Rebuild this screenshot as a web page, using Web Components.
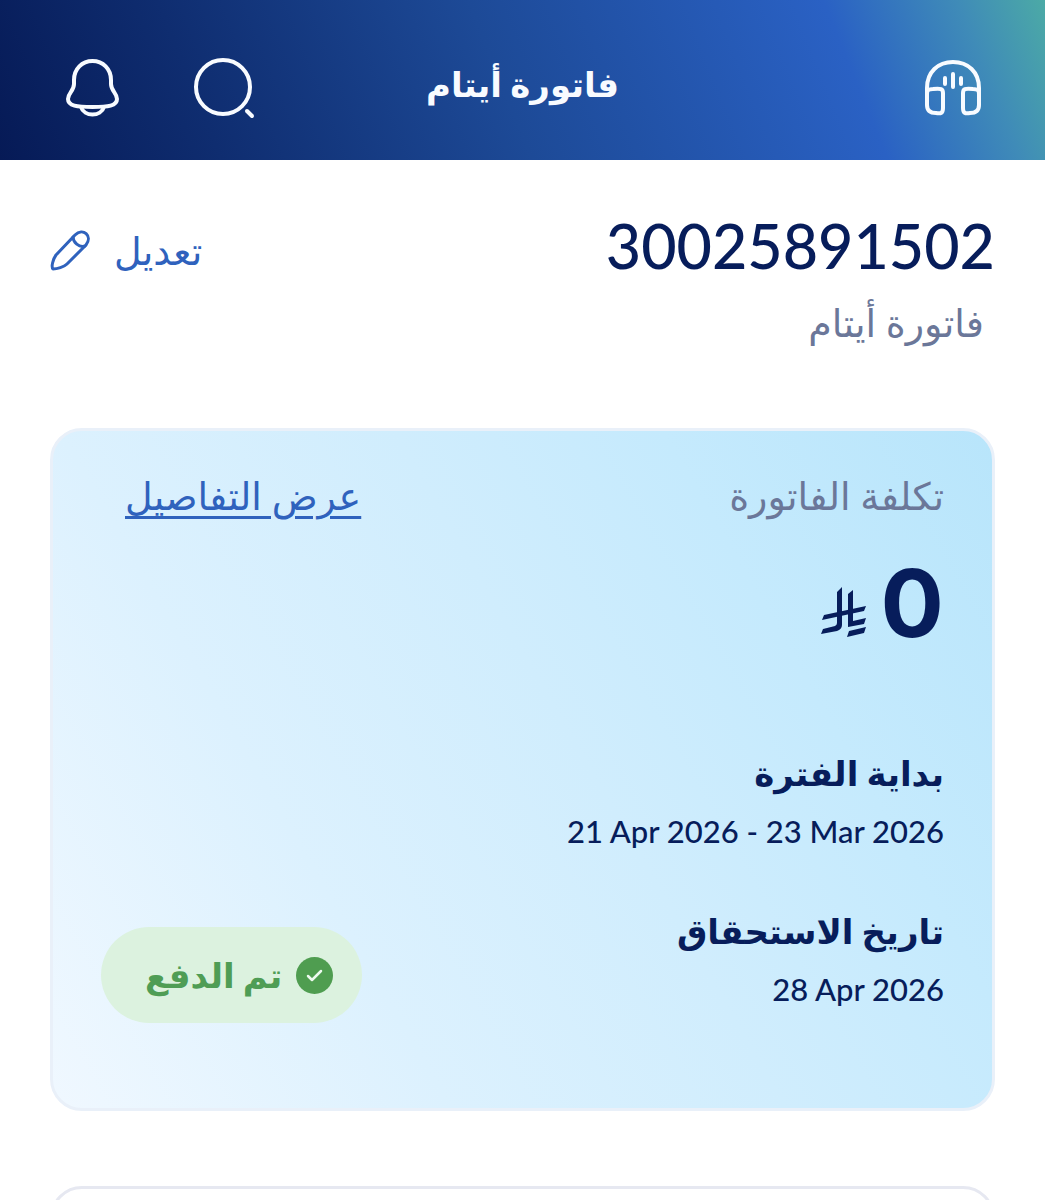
<!DOCTYPE html>
<html lang="ar" dir="rtl">
<head>
<meta charset="utf-8">
<meta name="viewport" content="width=device-width, initial-scale=1">
<title>فاتورة أيتام</title>
<style>
  body {
    margin: 0;
    background: #fff;
    color: #071d5b;
    font-family: Lato, "DejaVu Sans", sans-serif;
    --blue: #2f62bd;
    --muted: #6b7799;
    --line: #e6e8f1;
  }
</style>
</head>
<body>
<bill-page></bill-page>
<script>
  function define(name, html) {
    const template = document.createElement('template');
    template.innerHTML = html;
    customElements.define(name, class extends HTMLElement {
      constructor() {
        super();
        this.attachShadow({ mode: 'open' }).append(template.content.cloneNode(true));
      }
    });
  }

  define('icon-button', `
    <style>
      :host { display: block; }
      button { display: flex; align-items: center; gap: 24px; margin: 0; padding: 0; border: 0; background: none; color: inherit; font: inherit; cursor: pointer; }
    </style>
    <button type="button"><slot></slot></button>`);

  define('app-header', `
    <style>
      :host {
        display: grid; grid-template-columns: 1fr auto 1fr; align-items: center;
        height: 160px; padding: 16px 64px 0; box-sizing: border-box; color: #f8fbff;
        background: linear-gradient(68deg, #061a56 0%, #0f2d70 20%, #1d4a97 48%, #2a61c4 80%, #3f8bb8 92%, #4caaa6 100%);
      }
      h1 { margin: 0 0 8px; font-size: 34px; line-height: 48px; font-weight: 700; }
      .tools { display: flex; justify-content: flex-end; align-items: center; gap: 72px; }
      svg { display: block; fill: none; stroke: currentColor; stroke-width: 4; stroke-linecap: round; stroke-linejoin: round; }
    </style>
    <icon-button>
      <svg width="56" height="56" viewBox="0 0 56 56" role="img" aria-label="الدعم">
        <path d="M2 34V28C2 12 13 2 28 2s26 10 26 26v6"/>
        <path d="M2 34c0-4 2-5 6-5 8-1 10 0 10 4v15c0 5-2 6-7 5-6 0-9-3-9-8z"/>
        <path d="M54 34c0-4-2-5-6-5-8-1-10 0-10 4v15c0 5 2 6 7 5 6 0 9-3 9-8z"/>
        <path d="M20 18v6M28 14v13M36 18v6"/>
      </svg>
    </icon-button>
    <h1><slot></slot></h1>
    <div class="tools">
      <icon-button>
        <svg width="62" height="62" viewBox="0 0 62 62" role="img" aria-label="بحث">
          <circle cx="30" cy="30" r="27"/><path d="M54 54l5 5"/>
        </svg>
      </icon-button>
      <icon-button>
        <svg width="57" height="60" viewBox="0 0 57 60" role="img" aria-label="الإشعارات">
          <path d="M28.500 3C18 3 10 11 10 22v4c0 7-6 9-6 15 0 7 9 8 24.500 8S53 48 53 41c0-6-6-8-6-15v-4C47 11 39 3 28.500 3z"/>
          <path d="M17 49c3 10 20 10 23 0"/>
        </svg>
      </icon-button>
    </div>`);

  define('account-heading', `
    <style>
      :host { display: flex; justify-content: space-between; align-items: flex-start; }
      h2 { margin: 0; font-size: 61px; line-height: 72px; font-weight: 500; }
      p { margin: 16px 11px 0 0; font-size: 38px; line-height: 48px; color: var(--muted); }
      icon-button { margin-top: 16px; color: var(--blue); font-size: 38px; line-height: 48px; }
      svg { fill: none; stroke: currentColor; stroke-width: 3; stroke-linecap: round; stroke-linejoin: round; }
    </style>
    <div>
      <h2 dir="ltr"><slot name="number"></slot></h2>
      <p><slot name="name"></slot></p>
    </div>
    <icon-button>تعديل
      <svg width="40" height="42" viewBox="0 0 40 42" aria-hidden="true">
        <path d="M6 26L25 6c8-8 18 1 11 10L17 35c-3 3-10 5-14 5-2-2 0-10 3-14z"/>
        <path d="M23 8c0 5 6 11 12 9"/>
      </svg>
    </icon-button>`);

  define('status-pill', `
    <style>
      :host { display: flex; align-items: center; gap: 14px; height: 96px; padding: 0 29px 0 44px; box-sizing: border-box; border-radius: 48px; background: #dcf2df; color: #4f9d55; font-size: 34px; font-weight: 700; line-height: 48px; }
    </style>
    <svg width="37" height="37" viewBox="0 0 37 37" aria-hidden="true">
      <circle cx="18.500" cy="18.500" r="18.500" fill="#4f9d50"/>
      <path d="M12 19l4 4 9-9" fill="none" stroke="#eefaf0" stroke-width="2.500" stroke-linecap="round" stroke-linejoin="round"/>
    </svg>
    <span><slot></slot></span>`);

  define('bill-date', `
    <style>
      :host { display: block; }
      h3 { margin: 0; font-size: 34px; line-height: 48px; font-weight: 700; }
      p { margin: 10px 0 0; font-size: 31px; line-height: 48px; font-weight: 500; }
    </style>
    <h3><slot name="label"></slot></h3>
    <p><bdi dir="ltr"><slot></slot></bdi></p>`);

  define('bill-card', `
    <style>
      :host { display: block; padding: 40px 48px 85px; border: 3px solid #e9f0f9; border-radius: 32px; background: linear-gradient(240deg, #b8e5fb 0%, #c5eafd 25%, #d0edfd 45%, #dcf1fe 70%, #f0f8ff 100%) border-box; }
      .row { display: flex; justify-content: space-between; }
      .top { padding-inline-end: 24px; font-size: 38px; line-height: 48px; }
      .label { color: var(--muted); }
      a { color: var(--blue); text-decoration-thickness: 3px; text-underline-offset: 6px; }
      .amount { display: flex; align-items: baseline; gap: 14px; margin: 28px 0 90px; font-family: Inter, sans-serif; font-size: 94px; line-height: 112px; font-weight: 700; }
      .dates { display: grid; gap: 52px; padding-bottom: 10px; }
      .bottom { align-items: flex-end; }
    </style>
    <div class="row top">
      <span class="label">تكلفة الفاتورة</span>
      <a href="#details">عرض التفاصيل</a>
    </div>
    <div class="amount">
      <span>0</span>
      <svg width="46" height="50" viewBox="0 0 46 50" role="img" aria-label="ريال سعودي" fill="#071d5b">
        <path d="M16 5l5-5v38c0 3-2 5-5 6L0 47l2-5 12-3q2-1 2-3z"/>
        <path d="M3 28l42-9-2 5L1 33z"/>
        <path d="M27 7l5-4v31l13-3-2 6-16 3z"/>
        <path d="M28 44l17-4-2 6-17 4z"/>
      </svg>
    </div>
    <div class="row bottom">
      <div class="dates">
        <bill-date><span slot="label">بداية الفترة</span>21 Apr 2026 - 23 Mar 2026</bill-date>
        <bill-date><span slot="label">تاريخ الاستحقاق</span>28 Apr 2026</bill-date>
      </div>
      <status-pill>تم الدفع</status-pill>
    </div>`);

  define('outline-card', `
    <style>
      :host { display: block; box-sizing: border-box; min-height: 160px; border: 3px solid var(--line); border-radius: 32px; background: #fff; }
    </style>
    <slot></slot>`);

  define('bill-page', `
    <style>
      :host { display: flex; flex-direction: column; height: 100vh; overflow: hidden; }
      app-header { flex: none; }
      main { flex: 1; display: flex; flex-direction: column; padding: 50px 50px 0; }
      bill-card { margin: 82px 0 75px; }
      account-heading, bill-card, outline-card { flex: none; }
    </style>
    <app-header>فاتورة أيتام</app-header>
    <main>
      <account-heading>
        <span slot="number">30025891502</span>
        <span slot="name">فاتورة أيتام</span>
      </account-heading>
      <bill-card></bill-card>
      <outline-card></outline-card>
    </main>`);
</script>
</body>
</html>
